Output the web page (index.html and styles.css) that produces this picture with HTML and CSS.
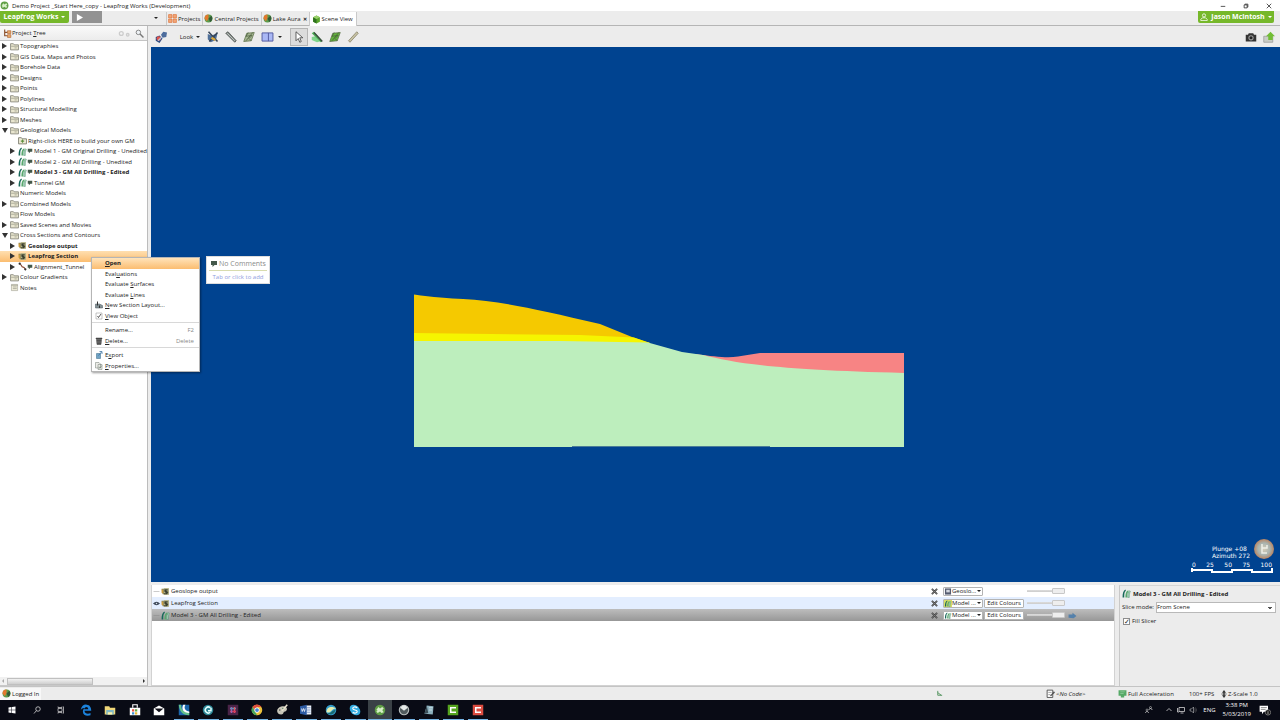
FILE: index.html
```html
<!DOCTYPE html>
<html lang="en">
<head>
    <meta charset="UTF-8">
    <meta name="viewport" content="width=device-width, initial-scale=1.0">
    <link rel="stylesheet" href="styles.css">
    <title>Demo Project _Start Here_copy - Leapfrog Works (Development)</title>
</head>
<body>

    <!-- shared icons -->
    <svg class="defs" aria-hidden="true">
        <symbol id="folder" viewBox="0 0 16 16"><path d="M1 14V3h5l1.500 2H15v9z" fill="#e9e6d0" stroke="#85857a" stroke-width="1.500"/><path d="M2 7.500h12M8 10.500h4" stroke="#a3a38f" stroke-width="1.500" fill="none"/></symbol>
        <symbol id="notes" viewBox="0 0 16 16"><path d="M2.500 2.500h11v11h-11z" fill="#f3f0dc" stroke="#9a9a8c"/><path d="M2 4h12M5 7h7M5 10h7" stroke="#a5a595" stroke-width="1.500"/></symbol>
        <symbol id="newfolder" viewBox="0 0 16 16"><path d="M1 14V3h5l1.500 2H15v9z" fill="#efecd8" stroke="#77776a" stroke-width="1.500"/><path d="M8 6v6M5 9h6" stroke="#5c8f3d" stroke-width="2"/></symbol>
        <symbol id="model" viewBox="0 0 16 16"><path d="M1 15C1 8 2 3 6 1l1 2C4 5 4 9 4 15z" fill="#17685a"/><path d="M6 15c0-7 1-11 5-13l1 2c-3 3-3 6-3 11z" fill="#59a96d"/><path d="M10 15c0-6 0-9 4-12l1 1c-2 4-2 7-2 11z" fill="#a4d3b4" stroke="#347b65" stroke-width=".7"/></symbol>
        <symbol id="bubble" viewBox="0 0 16 16"><path d="M2 2h12v8H9l-4 4v-4H2z" fill="#43584a"/></symbol>
        <symbol id="section" viewBox="0 0 16 16"><path d="M1 3h13v10H3z" fill="#85845e"/><path d="M5 2h9v12H5z" fill="#b7b58a"/><path d="M6 4h6v2H9l4 3-2 4H5v-2h4L6 8z" fill="#3c4130"/><path d="M1 4l3 1v7l-3-2z" fill="#c99a3a"/></symbol>
        <symbol id="line" viewBox="0 0 16 16"><path d="M2 3c5 0 3 6 7 6s2 4 5 5" fill="none" stroke="#8a4b35" stroke-width="2"/><circle cx="3" cy="3" r="2" fill="#333"/><circle cx="13" cy="13" r="2" fill="#333"/></symbol>
        <symbol id="frog" viewBox="0 0 16 16"><circle cx="8" cy="8" r="7" fill="#5f9f45"/><path d="M3 8l3-4 2 2 3-2 2 2-2 2 2 3-3 1-2-2-3 2-2-2 2-1z" fill="#d8efc9"/></symbol>
        <symbol id="globe" viewBox="0 0 16 16"><circle cx="8" cy="8" r="7" fill="#5c9b4b"/><path d="M8 1a7 7 0 00-7 7l4 5 3-5z" fill="#e3792e"/><path d="M8 8l5-5a7 7 0 01-2 11z" fill="#315b39"/></symbol>
        <symbol id="cube" viewBox="0 0 16 16"><path d="M2 4l6-3 6 3v8l-6 3-6-3z" fill="#5aa62c"/><path d="M2 4l6 3v8l-6-3z" fill="#2f701e"/><path d="M2 4l6-3 6 3-6 3z" fill="#9bd16c"/></symbol>
        <symbol id="cross" viewBox="0 0 16 16"><path d="M2 2l12 12M14 2L2 14" stroke="#444" stroke-width="4"/><path d="M2 2l12 12M14 2L2 14" stroke="#999"/></symbol>
        <symbol id="ruler" viewBox="0 0 16 16"><path d="M1 3l3-2 11 12-2 2z" fill="#7c8580" stroke="#4c504e"/><path d="M3 3l10 10" stroke="#d4d9d6"/></symbol>
        <symbol id="plane" viewBox="0 0 16 16"><path d="M5 3l10-1-4 11-10 1z" fill="currentColor" stroke="#5c7048"/><path d="M4 13l9-11M7 2l-3 5 8-1-4 4 3 3" fill="none" stroke="#4a5e3c"/></symbol>
    </svg>

    <div class="window">
        <header class="titlebar">
            <svg class="icon"><use href="#frog"/></svg>
            <span class="title">Demo Project _Start Here_copy - Leapfrog Works (Development)</span>
            <button class="winbtn" aria-label="Minimize"><svg viewBox="0 0 8 8"><path d="M1 4.500h6" stroke="#222"/></svg></button>
            <button class="winbtn" aria-label="Restore"><svg viewBox="0 0 8 8"><path d="M1.500 2.500h4v4h-4zM2.500 2V1.500h4v4H6" fill="none" stroke="#222"/></svg></button>
            <button class="winbtn" aria-label="Close"><svg viewBox="0 0 8 8"><path d="M1 1l6 6M7 1L1 7" stroke="#222"/></svg></button>
        </header>

        <nav class="tabstrip">
            <div class="brand">
                <button class="green">Leapfrog Works <i class="caret"></i></button>
                <button class="play" aria-label="Play"><svg viewBox="0 0 8 8"><path d="M1 0l7 4-7 4z" fill="#fff"/></svg></button>
            </div>
            <button class="tablist" aria-label="List tabs"><i class="caret"></i></button>
            <div class="tabs">
                <button class="tab"><svg class="icon" viewBox="0 0 16 16"><path d="M1 1h6v6H1zM9 1h6v6H9zM1 9h6v6H1zM9 9h6v6H9z" fill="#f2a678" stroke="#d9692c"/></svg>Projects</button>
                <button class="tab"><svg class="icon"><use href="#globe"/></svg>Central Projects</button>
                <button class="tab"><svg class="icon"><use href="#globe"/></svg>Lake Aura <b>✕</b></button>
                <button class="tab current"><svg class="icon"><use href="#cube"/></svg>Scene View</button>
            </div>
            <button class="green user"><svg viewBox="0 0 10 10"><circle cx="5" cy="3" r="2" fill="none" stroke="#fff"/><path d="M1 9.500V8l2-2h4l2 2v1.500z" fill="none" stroke="#fff"/></svg>Jason McIntosh <i class="caret"></i></button>
        </nav>

        <main class="work">
            <aside class="sidebar">
                <div class="panelhead">
                    <svg class="icon" viewBox="0 0 16 16"><path d="M3 1v11h5M3 6h5" fill="none" stroke="#8a4f2a" stroke-width="2"/><path d="M8 3h6v5H8zM8 10h6v5H8z" fill="#e9a768" stroke="#a85b27"/></svg>
                    <h2>Project <u>T</u>ree</h2>
                    <button aria-label="Font size"><svg class="wide" viewBox="0 0 20 14"><circle cx="5" cy="7" r="3" fill="none" stroke="#ccc" stroke-width="2"/><circle cx="15" cy="9" r="2" fill="none" stroke="#ccc" stroke-width="2"/></svg></button>
                    <button aria-label="Search"><svg class="icon" viewBox="0 0 16 16"><circle cx="6" cy="6" r="4" fill="#eef2f5" stroke="#777" stroke-width="1.500"/><path d="M9 9l6 6" stroke="#777" stroke-width="2.500"/></svg></button>
                </div>
                <ul class="tree">
                    <li><button class="toggle" aria-label="Expand"></button><svg class="icon"><use href="#folder"/></svg>Topographies</li>
                    <li><button class="toggle" aria-label="Expand"></button><svg class="icon"><use href="#folder"/></svg>GIS Data, Maps and Photos</li>
                    <li><button class="toggle" aria-label="Expand"></button><svg class="icon"><use href="#folder"/></svg>Borehole Data</li>
                    <li><button class="toggle" aria-label="Expand"></button><svg class="icon"><use href="#folder"/></svg>Designs</li>
                    <li><button class="toggle" aria-label="Expand"></button><svg class="icon"><use href="#folder"/></svg>Points</li>
                    <li><button class="toggle" aria-label="Expand"></button><svg class="icon"><use href="#folder"/></svg>Polylines</li>
                    <li><button class="toggle" aria-label="Expand"></button><svg class="icon"><use href="#folder"/></svg>Structural Modelling</li>
                    <li><button class="toggle" aria-label="Expand"></button><svg class="icon"><use href="#folder"/></svg>Meshes</li>
                    <li><button class="toggle open" aria-label="Collapse"></button><svg class="icon"><use href="#folder"/></svg>Geological Models</li>
                    <li class="child"><span class="toggle none"></span><svg class="icon"><use href="#newfolder"/></svg>Right-click HERE to build your own GM</li>
                    <li class="child"><button class="toggle" aria-label="Expand"></button><svg class="icon"><use href="#model"/></svg><svg class="note"><use href="#bubble"/></svg>Model 1 - GM Original Drilling - Unedited</li>
                    <li class="child"><button class="toggle" aria-label="Expand"></button><svg class="icon"><use href="#model"/></svg><svg class="note"><use href="#bubble"/></svg>Model 2 - GM All Drilling - Unedited</li>
                    <li class="child bold"><button class="toggle" aria-label="Expand"></button><svg class="icon"><use href="#model"/></svg><svg class="note"><use href="#bubble"/></svg>Model 3 - GM All Drilling - Edited</li>
                    <li class="child"><button class="toggle" aria-label="Expand"></button><svg class="icon"><use href="#model"/></svg><svg class="note"><use href="#bubble"/></svg>Tunnel GM</li>
                    <li><span class="toggle none"></span><svg class="icon"><use href="#folder"/></svg>Numeric Models</li>
                    <li><button class="toggle" aria-label="Expand"></button><svg class="icon"><use href="#folder"/></svg>Combined Models</li>
                    <li><span class="toggle none"></span><svg class="icon"><use href="#folder"/></svg>Flow Models</li>
                    <li><button class="toggle" aria-label="Expand"></button><svg class="icon"><use href="#folder"/></svg>Saved Scenes and Movies</li>
                    <li><button class="toggle open" aria-label="Collapse"></button><svg class="icon"><use href="#folder"/></svg>Cross Sections and Contours</li>
                    <li class="child bold"><button class="toggle" aria-label="Expand"></button><svg class="icon"><use href="#section"/></svg>Geoslope output</li>
                    <li class="child bold selected"><button class="toggle" aria-label="Expand"></button><svg class="icon"><use href="#section"/></svg>Leapfrog Section</li>
                    <li class="child"><button class="toggle" aria-label="Expand"></button><svg class="icon"><use href="#line"/></svg><svg class="note"><use href="#bubble"/></svg>Alignment_Tunnel</li>
                    <li><button class="toggle" aria-label="Expand"></button><svg class="icon"><use href="#folder"/></svg>Colour Gradients</li>
                    <li><span class="toggle none"></span><svg class="icon"><use href="#notes"/></svg>Notes</li>
                </ul>
                <div class="hscroll"><i class="left"></i><span class="thumb"></span><i class="right"></i></div>
            </aside>

            <section class="content">
                <div class="toolbar">
                    <button aria-label="Clear scene"><svg viewBox="0 0 16 16"><path d="M1 8l5-2 4 4-4 6-5-3z" fill="#284b82"/><circle cx="5" cy="10" r="3" fill="#e0564e"/><path d="M8 5l3-4 5 1-1 6-5 1z" fill="#4c6c9c"/><path d="M4 13l5-5" stroke="#b9c6dc" stroke-width="1.500"/></svg></button>
                    <button class="look">Look <i class="caret"></i></button>
                    <button aria-label="Slicer"><svg viewBox="0 0 16 16"><path d="M1 4l5 2 8-3-2 9-7 3-4-4z" fill="#4f7099"/><path d="M2 1l12 13M14 2L3 14" stroke="#354356" stroke-width="2"/><path d="M6 9l5 3" stroke="#d9a83c" stroke-width="3"/></svg></button>
                    <button aria-label="Ruler"><svg><use href="#ruler"/></svg></button>
                    <button class="dim" aria-label="Plane"><svg><use href="#plane"/></svg></button>
                    <button class="split" aria-label="Views"><svg class="views" viewBox="0 0 14 11"><path d="M1 1h12v9H1z" fill="#aab8f5" stroke="#4d559c"/><path d="M8 1v9" stroke="#4d559c"/></svg><i class="caret"></i></button>
                    <button class="active" aria-label="Select"><svg viewBox="0 0 16 16"><path d="M4 1v12l3-3 2 5 2-1-2-5h4z" fill="#fff" stroke="#333"/></svg></button>
                    <button aria-label="Draw slicer line"><svg viewBox="0 0 16 16"><path d="M1 8l5-1 9 6-7 2-7-3z" fill="#7fd48a"/><path d="M1 3l3-2 11 12-2 2z" fill="#4fae58"/><path d="M4 2l11 12" stroke="#3b4d3d" stroke-width="2"/></svg></button>
                    <button class="lime" aria-label="Draw plane"><svg><use href="#plane"/></svg></button>
                    <button aria-label="Measure"><svg viewBox="0 0 16 16"><path d="M2 13L13 1l2 2L4 15z" fill="#c7c3a5" stroke="#857f64"/></svg></button>
                    <span class="spring"></span>
                    <button aria-label="Screenshot"><svg viewBox="0 0 16 16"><path d="M1 5h3l1-2h6l1 2h3v9H1z" fill="#333"/><circle cx="8" cy="9" r="3.500" fill="#999"/><circle cx="8" cy="9" r="2" fill="#222"/></svg></button>
                    <button aria-label="Upload view"><svg viewBox="0 0 16 16"><path d="M1 7h12v8H1z" fill="#c9cdc6" stroke="#999"/><path d="M7 12V7H4l6-6 6 6h-3v5z" fill="#72bd35"/></svg></button>
                </div>

                <div class="scene">
                    <svg class="drawing" viewBox="151 47 1129 535">
                        <path d="M414 294.500C432 297 450 298.500 463 299C500 301 535 309 600 324L632 337L650 343V400H414z" fill="#f5c900"/>
                        <path d="M414 333L580 335L634 337.500L650 343L640 360H414z" fill="#f5f500"/>
                        <path d="M695 354C717 357 728 358 738 356.500L760 353H904V390H740z" fill="#f78484"/>
                        <path d="M414 341H560L648 342.500L682 352L703 355C735 363 775 370 904 373V447H414z" fill="#bdeebd"/>
                        <path d="M572 446.500h198" stroke="#4a7c97" stroke-width="1"/>
                    </svg>
                    <div class="compass">
                        <div class="angles"><span>Plunge +08<br>Azimuth 272</span><svg viewBox="0 0 20 20"><defs><radialGradient id="ball"><stop offset="0" stop-color="#d6cdb8"/><stop offset=".6" stop-color="#a9b4b0"/><stop offset="1" stop-color="#b98461"/></radialGradient></defs><circle cx="10" cy="10" r="10" fill="url(#ball)"/><path d="M8 5v9h5M8 9h5V6" fill="none" stroke="#eef0e8" stroke-width="1.500"/></svg></div>
                        <div class="ticks"><span>0</span><span>25</span><span>50</span><span>75</span><span>100</span></div>
                        <svg class="bar" viewBox="0 0 82 6"><path d="M1 0v4M0 2h21M20 4h21M40 2h21M60 4h21M21 1v4M41 1v4M61 1v4M81 0v5" fill="none" stroke="#fff" stroke-width="2"/></svg>
                    </div>
                </div>

                <div class="lower">
                    <ul class="shapes">
                        <li>
                            <button class="eye off" aria-label="Show"><svg viewBox="0 0 14 8"><path d="M1 4h12" stroke="#ccc" stroke-width="2"/></svg></button>
                            <svg class="icon"><use href="#section"/></svg><span class="name">Geoslope output</span>
                            <button class="remove" aria-label="Remove"><svg><use href="#cross"/></svg></button>
                            <button class="pick"><svg viewBox="0 0 16 16"><path d="M1 1h14v14H1z" fill="#555c70"/><path d="M4 4h8v6H4z" fill="#d3d7df"/></svg>Geoslo... <i class="caret"></i></button>
                            <span class="edit none"></span>
                            <input type="range" value="100" aria-label="Geoslope output opacity"><span class="extra"></span>
                        </li>
                        <li class="tint">
                            <button class="eye" aria-label="Hide"><svg viewBox="0 0 14 8"><path d="M0 4q7-7 14 0q-7 7-14 0z" fill="#3d4756"/><circle cx="7" cy="4" r="1.500" fill="#d8e2ef"/></svg></button>
                            <svg class="icon"><use href="#section"/></svg><span class="name">Leapfrog Section</span>
                            <button class="remove" aria-label="Remove"><svg><use href="#cross"/></svg></button>
                            <button class="pick olive"><svg><use href="#model"/></svg>Model ... <i class="caret"></i></button>
                            <button class="edit">Edit Colours</button>
                            <input type="range" value="100" aria-label="Leapfrog Section opacity"><span class="extra"></span>
                        </li>
                        <li class="picked">
                            <button class="eye off" aria-label="Show"><svg viewBox="0 0 14 8"><path d="M1 4h12" stroke="#999" stroke-width="2"/></svg></button>
                            <svg class="icon"><use href="#model"/></svg><span class="name">Model 3 - GM All Drilling - Edited</span>
                            <button class="remove" aria-label="Remove"><svg><use href="#cross"/></svg></button>
                            <button class="pick"><svg><use href="#model"/></svg>Model ... <i class="caret"></i></button>
                            <button class="edit">Edit Colours</button>
                            <input type="range" value="100" aria-label="Model 3 opacity"><span class="extra"><svg viewBox="0 0 16 12"><path d="M1 4h7V1l7 6-5 4-9-1z" fill="#5581ab"/></svg></span>
                        </li>
                    </ul>
                    <div class="props">
                        <h2><svg class="icon"><use href="#model"/></svg>Model 3 - GM All Drilling - Edited</h2>
                        <div class="field">
                            <label for="slice">Slice mode:</label>
                            <select id="slice"><option>From Scene</option></select>
                        </div>
                        <div class="field"><input type="checkbox" id="fill" checked><label for="fill">Fill Slicer</label></div>
                    </div>
                </div>
            </section>
        </main>

        <footer class="status">
            <button class="login"><svg class="icon"><use href="#globe"/></svg>Logged In</button>
            <svg class="axis" viewBox="0 0 8 8"><path d="M2 1v5h5M2 3l4 3" fill="none" stroke="#4c8f57"/></svg>
            <span class="code"><svg class="icon" viewBox="0 0 16 16"><path d="M2 2h10v13H2z" fill="#fff" stroke="#444" stroke-width="1.500"/><path d="M4 6h6M4 10h4" stroke="#666"/><path d="M7 12l7-8 2 2-7 7z" fill="#555"/></svg><em>&lt;No Code&gt;</em></span>
            <span class="accel"><svg class="icon" viewBox="0 0 16 16"><path d="M1 2h14v10H1zM5 12h6v3H5z" fill="#55a966"/><path d="M4 5h8M4 8h6" stroke="#a8d9b0"/></svg>Full Acceleration</span>
            <span class="fps">100+ FPS</span>
            <span class="zscale"><svg viewBox="0 0 8 12"><path d="M4 0l3 4H5v4h2l-3 4-3-4h2V4H1z" fill="#333"/><path d="M0 6h8" stroke="#333"/></svg>Z-Scale 1.0</span>
        </footer>

        <div class="taskbar">
            <div class="apps">
                <button aria-label="Start"><svg viewBox="0 0 16 16"><path d="M1 3l6-1v5.500H1zM8 2l7-1v6.500H8zM1 8.500h6V14l-6-1zM8 8.500h7V15l-7-1z" fill="#fff"/></svg></button>
                <button aria-label="Search"><svg viewBox="0 0 16 16"><circle cx="10" cy="6" r="4.500" fill="none" stroke="#ddd" stroke-width="1.500"/><path d="M7 9l-5 6" stroke="#ddd" stroke-width="1.500"/></svg></button>
                <button aria-label="Task view"><svg viewBox="0 0 16 16"><path d="M2 5h8v6H2zM2 1v2h8V1M2 15v-2h8v2M13 1v14" fill="none" stroke="#ccc" stroke-width="1.500"/></svg></button>
                <button aria-label="Edge"><svg viewBox="0 0 16 16"><path d="M1 8C2 2 6 0 9 1c4 0 6 4 6 8H6c0 4 5 5 8 3v3C8 17 3 14 4 9c0-2 2-4 4-4-3 0-6 1-7 3zM6 7h5c0-4-5-4-5 0z" fill="#1c83dc"/></svg></button>
                <button aria-label="File Explorer"><svg viewBox="0 0 16 16"><path d="M1 3h6l1 2h7v9H1z" fill="#f0d779"/><path d="M3 8h10v6H3z" fill="#7fb7c4"/><path d="M5 11h6v3H5z" fill="#fff2a9"/></svg></button>
                <button aria-label="Store"><svg viewBox="0 0 16 16"><path d="M1 5h14v10H1z" fill="#fff"/><path d="M5 5V1h6v4" fill="none" stroke="#fff" stroke-width="1.500"/><path d="M4 7h3v3H4z" fill="#e75342"/><path d="M8 7h3v3H8z" fill="#66a844"/><path d="M4 11h3v3H4z" fill="#3c91d2"/><path d="M8 11h3v3H8z" fill="#e7b936"/></svg></button>
                <button aria-label="Mail"><svg viewBox="0 0 16 16"><path d="M1 6l7-4 7 4v9H1z" fill="#fff"/><path d="M2 6h12l-6 5z" fill="#101019"/></svg></button>
                <button class="run" aria-label="Seequent"><svg viewBox="0 0 16 16"><path d="M1 1h14v14H1z" fill="#1b65aa"/><path d="M4 1c0 7 4 10 11 10v4C6 15 2 10 1 1z" fill="#63c08a"/><path d="M10 1c-3 5 0 8 5 9v2C7 12 4 7 7 1z" fill="#fff"/></svg></button>
                <button class="run" aria-label="Camtasia"><svg viewBox="0 0 16 16"><circle cx="8" cy="8" r="7" fill="#2a8494"/><path d="M11 5a4 4 0 100 6M12 5v4H8" fill="none" stroke="#e4ffff" stroke-width="2"/></svg></button>
                <button class="run" aria-label="Slack"><svg viewBox="0 0 16 16"><path d="M1 1h14v14H1z" fill="#4a2448"/><path d="M4 6h8" stroke="#47a8bc" stroke-width="2"/><path d="M10 4v8" stroke="#e05163" stroke-width="2"/><path d="M4 10h8" stroke="#d7395c" stroke-width="2"/><path d="M6 4v8" stroke="#8f6ab5" stroke-width="2"/></svg></button>
                <button class="run" aria-label="Chrome"><svg viewBox="0 0 16 16"><circle cx="8" cy="8" r="7" fill="#ecc03b"/><path d="M2 4a7 7 0 0112 0H8L5 8z" fill="#df4f3d"/><path d="M2 4l4 7 2 4A7 7 0 012 4z" fill="#45a55a"/><circle cx="8" cy="8" r="3.500" fill="#fff"/><circle cx="8" cy="8" r="2.500" fill="#4485d5"/></svg></button>
                <button class="run" aria-label="Paint"><svg viewBox="0 0 16 16"><path d="M8 3c8-1 8 6 4 7-3 0-1 4-5 4C0 14-1 5 8 3z" fill="#c8c6b8"/><path d="M8 9l7-8" stroke="#e8e2ce" stroke-width="2"/><circle cx="5" cy="8" r="1" fill="#444"/><circle cx="9" cy="6" r="1" fill="#6a8c74"/></svg></button>
                <button class="run" aria-label="Word"><svg viewBox="0 0 16 16"><path d="M8 2h7v12H8z" fill="#eef3fb"/><path d="M9 5h5M9 8h5M9 11h5" stroke="#6584b9"/><path d="M0 3l9-2v14l-9-2z" fill="#2c5aa3"/><path d="M2 6l1 4 1.500-4L6 10l1-4" fill="none" stroke="#fff"/></svg></button>
                <button class="run" aria-label="Leapfrog viewer"><svg viewBox="0 0 16 16"><circle cx="8" cy="8" r="7" fill="#329ac9"/><path d="M2 11C2 4 9 2 15 6c-6-1-6 7-13 5z" fill="#e3efb1"/><path d="M3 12c6 1 7-5 11-4-1 5-6 8-11 4z" fill="#196b72"/></svg></button>
                <button class="run" aria-label="Skype"><svg viewBox="0 0 16 16"><circle cx="6" cy="6" r="5" fill="#35aee2"/><circle cx="10" cy="10" r="5" fill="#35aee2"/><circle cx="8" cy="8" r="6" fill="#35aee2"/><path d="M11 5C8 3 5 4 5 6c0 3 6 1 6 4 0 2-4 3-6 1" fill="none" stroke="#fff" stroke-width="1.500"/></svg></button>
                <button class="run front" aria-label="Leapfrog Works"><svg><use href="#frog"/></svg></button>
                <button class="run" aria-label="Browser"><svg viewBox="0 0 16 16"><circle cx="8" cy="8" r="7" fill="#b7bdbc"/><circle cx="8" cy="8" r="5.500" fill="#515b5e"/><path d="M3 5l5 4 5-4-3-3H6z" fill="#e6eae9"/></svg></button>
                <button class="run" aria-label="Notebook"><svg viewBox="0 0 16 16"><path d="M5 2l9 1-1 11-11-1z" fill="#8cb0bd"/><path d="M5 2L2 13l5-1z" fill="#394b55"/><path d="M8 5h5M8 8h4" stroke="#dceaf0"/></svg></button>
                <button class="run" aria-label="Camtasia Studio"><svg viewBox="0 0 16 16"><path d="M1 1h14v14H1z" fill="#56a51f"/><path d="M12 5H5v6h7" fill="none" stroke="#fff" stroke-width="2"/></svg></button>
                <button class="run" aria-label="Camtasia Recorder"><svg viewBox="0 0 16 16"><path d="M1 1h14v14H1z" fill="#dc4c40"/><path d="M12 5H5v6h7" fill="none" stroke="#fff" stroke-width="2"/></svg></button>
            </div>
            <div class="tray">
                <svg viewBox="0 0 16 16"><path d="M1 14c0-4 6-4 6 0M8 8c0-4 6-4 6 0" fill="none" stroke="#ddd" stroke-width="1.500"/><circle cx="4" cy="8" r="2" fill="none" stroke="#ddd"/><circle cx="11" cy="3" r="2" fill="none" stroke="#ddd"/></svg>
                <svg class="up" viewBox="0 0 16 16"><path d="M3 10l5-5 5 5" fill="none" stroke="#ddd" stroke-width="1.500"/></svg>
                <svg viewBox="0 0 16 16"><path d="M4 3h11v8H4zM7 14h6M1 4v8h3" fill="none" stroke="#ddd" stroke-width="1.500"/></svg>
                <svg viewBox="0 0 16 16"><path d="M2 6h3l4-4v12l-4-4H2z" fill="none" stroke="#ddd"/><path d="M11 5q3 3 0 6M13 3q4 5 0 10" fill="none" stroke="#777"/></svg>
                <span class="lang">ENG</span>
                <span class="clock">3:38 PM<br>5/03/2019</span>
                <svg class="notify" viewBox="0 0 20 20"><path d="M1 3h14v10H8l-3 4v-4H1z" fill="#fff"/><path d="M3 6h10M3 9h8" stroke="#444"/><circle cx="15" cy="14" r="4.500" fill="#111" stroke="#aaa"/><path d="M15 12v5" stroke="#fff"/></svg>
            </div>
        </div>
    </div>

    <!-- right-click menu for the selected section -->
    <div class="menu" role="menu">
        <div class="group six">
            <button class="hot" role="menuitem"><i></i><span><u>O</u>pen</span></button>
            <button role="menuitem"><i></i><span>Eval<u>u</u>ations</span></button>
            <button role="menuitem"><i></i><span>Evaluate <u>S</u>urfaces</span></button>
            <button role="menuitem"><i></i><span>Evaluate <u>L</u>ines</span></button>
            <button role="menuitem"><i><svg viewBox="0 0 16 16"><path d="M1 14h14V9L9 6H1z" fill="#869397" stroke="#47535a"/><path d="M5 1v8M9 9v5" stroke="#333" stroke-width="2"/></svg></i><span><u>N</u>ew Section Layout...</span></button>
            <button role="menuitemcheckbox" aria-checked="true"><i><svg viewBox="0 0 16 16"><path d="M2 2h12v12H2z" fill="#fff" stroke="#8b8b8b"/><path d="M5 8l2 3 5-7" fill="none" stroke="#222" stroke-width="1.500"/></svg></i><span><u>V</u>iew Object</span></button>
        </div>
        <div class="group two">
            <button role="menuitem"><i></i><span>Rename...</span><kbd>F2</kbd></button>
            <button role="menuitem"><i><svg viewBox="0 0 16 16"><path d="M3 5h10l-1 10H4zM2 2h12v2H2z" fill="#444" stroke="#444"/><path d="M6 7v6M10 7v6" stroke="#bbb"/></svg></i><span><u>D</u>elete...</span><kbd>Delete</kbd></button>
        </div>
        <div class="group two">
            <button role="menuitem"><i><svg viewBox="0 0 16 16"><path d="M3 5h8v10H3z" fill="#71a3c5" stroke="#326687"/><path d="M9 1h5v5M13 2L7 9" fill="none" stroke="#366f9e" stroke-width="1.500"/></svg></i><span>E<u>x</u>port</span></button>
            <button role="menuitem"><i><svg viewBox="0 0 16 16"><path d="M1 1h7l3 3v8H1zM6 5h8v10H6z" fill="#ecece7" stroke="#707b72"/><path d="M8 9l2 3 4-5" fill="none" stroke="#617b64"/></svg></i><span><u>P</u>roperties...</span></button>
        </div>
    </div>

    <div class="comment">
        <p><svg><use href="#bubble"/></svg>No Comments</p>
        <a href="#">Tab or click to add</a>
    </div>

</body>
</html>
```
FILE: styles.css
```css
* {
    box-sizing: border-box;
}
body {
    margin: 0;
    font-family: "Open Sans", "Noto Sans", sans-serif;
    font-size: 6px;
    line-height: 10px;
    color: #222;
    background: #ececec;
}
button, input, select {
    font: inherit;
    color: inherit;
    margin: 0;
    padding: 0;
}
button {
    border: none;
    background: none;
    display: flex;
    align-items: center;
    justify-content: center;
    white-space: nowrap;
}
h2, p, ul {
    margin: 0;
    padding: 0;
    font-size: 6px;
    font-weight: normal;
    list-style: none;
}
svg {
    display: block;
    flex: none;
}
.defs {
    position: absolute;
    width: 0;
    height: 0;
}
.icon {
    width: 9px;
    height: 9px;
}
.caret {
    border: 2px solid transparent;
    border-top-color: currentColor;
    border-bottom: 0;
    margin-left: 3px;
}
.window {
    display: flex;
    flex-direction: column;
    height: 100vh;
}

/* title and tabs */
.titlebar {
    display: flex;
    align-items: center;
    height: 11px;
    background: #fff;
}
.title {
    flex: 1;
    padding-left: 3px;
}
.winbtn {
    width: 23px;
    height: 11px;
}
.winbtn svg {
    width: 6px;
    height: 6px;
}
.tabstrip {
    display: flex;
    height: 15px;
    border-bottom: 1px solid #b5b5b5;
}
.brand {
    display: flex;
    gap: 3px;
    width: 154px;
}
.green {
    background: #76b82a;
    color: #fff;
    font-weight: bold;
    font-size: 7px;
    height: 12px;
    width: 69px;
    border-radius: 0 0 2px 2px;
}
.user {
    width: 76px;
    margin: 0 6px 0 auto;
}
.user svg {
    width: 8px;
    height: 8px;
    margin-right: 3px;
}
.play {
    width: 30px;
    height: 12px;
    background: #929292;
    justify-content: flex-start;
    padding-left: 4px;
}
.play svg {
    width: 7px;
    height: 7px;
}
.tablist {
    width: 12px;
    justify-content: flex-start;
}
.tablist .caret {
    margin-left: 0;
}
.tabs {
    display: flex;
    padding-top: 1px;
}
.tab {
    gap: 1px;
    padding: 0 2px 0 1px;
    border-left: 1px solid #c9c9c9;
}
.tab b {
    margin-left: 1px;
    font-size: 5px;
}
.tab.current {
    height: 14px;
    padding: 0 3px 0 2px;
    background: #fff;
    border-right: 1px solid #c9c9c9;
}

/* project tree */
.work {
    display: flex;
    flex: 1;
    min-height: 0;
}
.sidebar {
    display: flex;
    flex-direction: column;
    width: 148px;
    margin-right: 3px;
    background: #fff;
    border-right: 1px solid #bcbcbc;
}
.panelhead {
    display: flex;
    align-items: center;
    height: 15px;
    padding: 0 3px;
    gap: 4px;
    background: linear-gradient(#fafafa, #ececec);
    border-bottom: 1px solid #c4c4c4;
}
.panelhead h2 {
    flex: 1;
    margin-left: -4px;
}
.panelhead .wide {
    width: 13px;
    height: 9px;
}
.tree {
    display: grid;
    grid-template-rows: repeat(24, 1fr);
    height: 252px;
}
.tree li {
    display: flex;
    align-items: center;
    gap: 1px;
    padding-left: 2px;
    white-space: nowrap;
}
.tree .child {
    padding-left: 10px;
}
.tree .note {
    width: 6px;
    height: 8px;
    margin-left: -1px;
}
.bold {
    font-weight: bold;
}
.selected {
    background: linear-gradient(#ffdfb0, #fbbd70);
}
.toggle {
    width: 7px;
    height: 7px;
    justify-content: flex-start;
}
.toggle::before {
    content: "";
    border: 3px solid transparent;
    border-left: 5px solid #333;
    border-right: 0;
}
.toggle.open::before {
    border: 3px solid transparent;
    border-top: 5px solid #333;
    border-bottom: 0;
}
.toggle.none::before {
    content: none;
}
.hscroll {
    display: flex;
    align-items: center;
    gap: 3px;
    height: 9px;
    margin-top: auto;
    padding: 0 2px;
    background: #f1f1f1;
    border-bottom: 1px solid #c8c8c8;
}
.hscroll i {
    border: 2px solid transparent;
}
.hscroll .left {
    border-right-color: #aaa;
    border-left: 0;
}
.hscroll .right {
    margin-left: auto;
    border-left-color: #333;
    border-right: 0;
}
.thumb {
    width: 60%;
    height: 7px;
    background: linear-gradient(#f2f2f2, #cfcfcf);
    border: 1px solid #c0c0c0;
}

/* toolbar */
.content {
    display: flex;
    flex-direction: column;
    flex: 1;
    min-width: 0;
}
.toolbar {
    display: flex;
    align-items: center;
    height: 21px;
    padding: 0 2px 0 1px;
}
.toolbar button {
    width: 18px;
    height: 18px;
}
.toolbar svg {
    width: 12px;
    height: 12px;
}
.toolbar .look {
    width: 34px;
    padding-left: 6px;
}
.toolbar .split {
    width: 32px;
    justify-content: flex-start;
    padding-left: 3px;
}
.toolbar .split .caret {
    margin-left: 4px;
}
.toolbar .views {
    width: 13px;
    height: 10px;
}
.toolbar .active {
    border: 1px solid #b5b5b5;
    background: #dcdcdc;
}
.dim {
    color: #a5b591;
}
.lime {
    color: #63b53b;
}
.spring {
    flex: 1;
}

/* scene */
.scene {
    position: relative;
    flex: 1;
    min-height: 0;
    background: #004390;
}
.drawing {
    width: 100%;
    height: 100%;
}
.compass {
    position: absolute;
    right: 6px;
    bottom: 8px;
    width: 83px;
    color: #fff;
    font-family: "DejaVu Sans", sans-serif;
    line-height: 7px;
}
.angles {
    display: flex;
    justify-content: flex-end;
    align-items: flex-end;
    gap: 4px;
    text-align: left;
}
.angles svg {
    width: 20px;
    height: 20px;
}
.ticks {
    display: flex;
    justify-content: space-between;
    margin-top: 2px;
    padding: 0 2px 0 1px;
}
.bar {
    width: 82px;
    height: 6px;
}

/* shape list */
.lower {
    display: flex;
    height: 104px;
    padding-top: 3px;
    gap: 4px;
}
.shapes {
    flex: 1;
    background: #fff;
    border: 1px solid #d2d2d2;
    border-top: 0;
}
.shapes li {
    display: flex;
    align-items: center;
    height: 12px;
    gap: 1px;
}
.tint {
    background: #e3eeff;
}
.picked {
    background: linear-gradient(#bdbdbd, #979797);
}
.eye {
    width: 8px;
}
.eye svg {
    width: 7px;
    height: 5px;
}
.name {
    flex: 1;
}
.remove {
    width: 16px;
}
.remove svg {
    width: 7px;
    height: 7px;
}
.pick, .edit {
    height: 9px;
    width: 40px;
    background: #fff;
    border: 1px solid #b4b4b4;
    border-radius: 1px;
}
.pick {
    justify-content: flex-start;
    overflow: hidden;
}
.pick svg {
    width: 8px;
    height: 7px;
}
.pick .caret {
    margin: 0 1px 0 auto;
}
.olive svg {
    background: #d6dd65;
}
.edit {
    margin: 0 2px 0 0;
}
.edit.none {
    visibility: hidden;
}
.shapes input {
    appearance: none;
    width: 38px;
    height: 8px;
    background: linear-gradient(#ddd, #ccc) center / 100% 2px no-repeat;
}
.shapes input::-webkit-slider-thumb {
    appearance: none;
    width: 13px;
    height: 6px;
    background: #eee;
    border: 1px solid #c8c8c8;
    border-radius: 1px;
}
.extra {
    width: 48px;
}
.extra svg {
    width: 9px;
    height: 7px;
    margin-left: 2px;
}
.props {
    width: 161px;
    padding: 3px 4px 0 2px;
    border-left: 1px solid #c8c8c8;
    border-top: 1px solid #d5d5d5;
}
.props h2 {
    display: flex;
    align-items: center;
    gap: 2px;
    height: 9px;
    font-weight: bold;
}
.field {
    display: flex;
    align-items: center;
    gap: 2px;
    height: 10px;
    margin-top: 4px;
}
select {
    appearance: none;
    flex: 1;
    height: 11px;
    line-height: 9px;
    border: 1px solid #b9b9b9;
    border-radius: 0;
    background: linear-gradient(#555, #555) right 3px top 4px / 4px 1px no-repeat, linear-gradient(#555, #555) right 4px top 5px / 2px 1px no-repeat, #fff;
}
input[type="checkbox"] {
    appearance: none;
    width: 7px;
    height: 7px;
    margin-left: 1px;
    border: 1px solid #8d8d8d;
    background: #fff;
    display: grid;
    place-items: center;
}
input[type="checkbox"]:checked::before {
    content: "✓";
    font-size: 7px;
    line-height: 5px;
}

/* status bar */
.status {
    display: flex;
    align-items: center;
    height: 14px;
    border-top: 1px solid #c4c4c4;
    white-space: nowrap;
}
.status span {
    display: flex;
    align-items: center;
    gap: 1px;
}
.login {
    height: 12px;
    padding: 0 2px;
    gap: 1px;
    background: #f8f8f8;
}
.axis {
    width: 7px;
    height: 7px;
    margin-left: auto;
}
.code {
    width: 72px;
    margin-left: 103px;
}
.accel {
    width: 71px;
}
.fps {
    width: 32px;
}
.zscale {
    width: 59px;
}
.zscale svg {
    width: 6px;
    height: 8px;
}

/* taskbar */
.taskbar {
    display: flex;
    justify-content: space-between;
    height: 20px;
    background: #090b15;
    color: #fff;
}
.apps {
    display: grid;
    grid-template-columns: repeat(20, 1fr);
    width: 490px;
}
.apps button {
    height: 20px;
    margin: 0 2px;
    border-bottom: 1px solid transparent;
}
.apps svg {
    width: 12px;
    height: 12px;
}
.apps button:nth-child(-n+3) svg {
    width: 8px;
    height: 8px;
}
.apps .run {
    border-bottom-color: #76b5e5;
}
.apps .front {
    background: #3a4146;
    margin: 0;
}
.tray {
    display: flex;
    align-items: center;
    gap: 4px;
    padding-right: 9px;
}
.tray svg {
    width: 8px;
    height: 8px;
}
.tray .up {
    margin-left: 8px;
}
.lang {
    margin: 0 3px 0 2px;
}
.tray .notify {
    width: 12px;
    height: 12px;
    margin-left: 4px;
}
.clock {
    text-align: center;
    line-height: 9px;
}

/* popups */
.menu {
    position: absolute;
    left: 91px;
    top: 257px;
    width: 109px;
    background: #fff;
    border: 1px solid #b5b5b5;
    box-shadow: 1px 1px 2px rgba(0, 0, 0, 0.4);
}
.group {
    display: grid;
}
.group + .group {
    border-top: 1px solid #d8d8d8;
    margin-top: 1px;
    padding-top: 2px;
}
.six {
    height: 63px;
}
.two {
    height: 24px;
}
.menu button {
    justify-content: flex-start;
    gap: 2px;
    padding: 0 5px 0 3px;
}
.menu i {
    width: 8px;
    height: 8px;
}
.menu svg {
    width: 8px;
    height: 8px;
}
.menu kbd {
    margin-left: auto;
    font-family: inherit;
    color: #888;
}
.menu .hot {
    background: linear-gradient(#ffe3ba, #fbbd70);
    font-weight: bold;
}
.comment {
    position: absolute;
    left: 206px;
    top: 256px;
    width: 64px;
    height: 28px;
    padding: 1px 2px;
    background: #fff;
    border: 1px solid #ddd;
    text-align: center;
    white-space: nowrap;
}
.comment p {
    display: flex;
    gap: 1px;
    height: 13px;
    align-items: center;
    padding-left: 1px;
    font-size: 7px;
    color: #8a8a8a;
    border-bottom: 1px solid #d8dcae;
}
.comment svg {
    width: 8px;
    height: 8px;
}
.comment a {
    color: #8f9de0;
    text-decoration: none;
    line-height: 13px;
}
```
